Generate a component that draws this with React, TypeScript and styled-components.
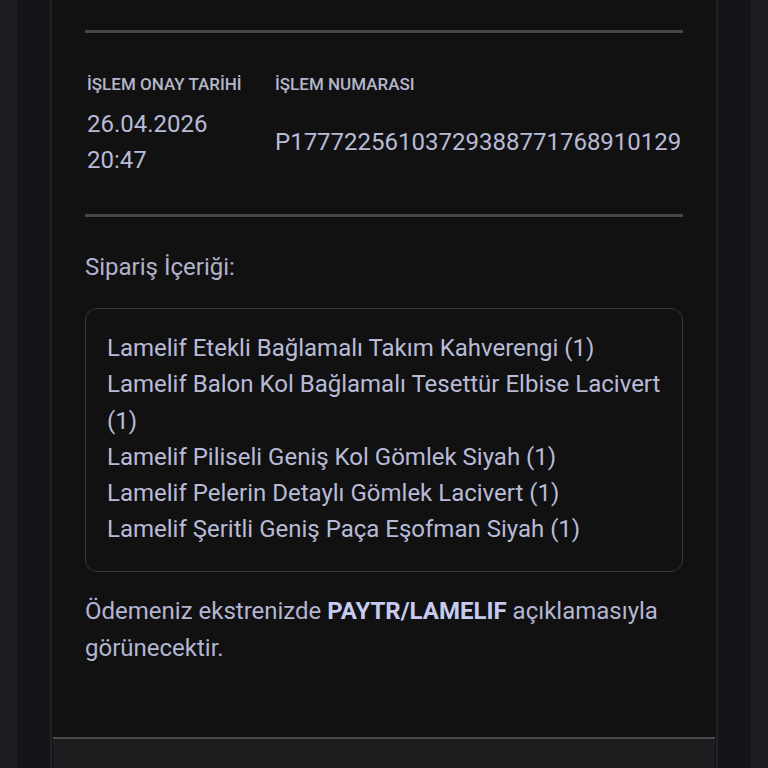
import React from 'react';
import styled, { createGlobalStyle } from 'styled-components';

const GlobalStyle = createGlobalStyle`
  html, body {
    margin: 0;
    padding: 0;
    background: #1d1e23;
    font-family: Roboto, "Noto Sans", "Liberation Sans", sans-serif;
  }
`;

const Screen = styled.div`
  padding: 0 17px;
  min-height: 768px;
  background: #1d1e23;
`;

const Backdrop = styled.div`
  background: #14151a;
  padding: 0 33px;
  min-height: 768px;
`;

const Card = styled.div`
  background: #111111;
  border-left: 2px solid #222226;
  border-right: 2px solid #222226;
  min-height: 768px;
  display: flex;
  flex-direction: column;
`;

const Body = styled.div`
  padding: 30px 33px 0 33px;
  color: #b6b9d6;
`;

const Divider = styled.hr`
  margin: 0;
  border: none;
  height: 3px;
  background: #454548;
`;

const InfoGrid = styled.div`
  display: grid;
  grid-template-columns: 188px 1fr;
  row-gap: 12px;
  padding: 41px 0 36px 2px;
  align-items: center;
`;

const Label = styled.div`
  font-size: 17px;
  font-weight: 500;
  line-height: 20px;
  color: #b4b7cc;
  align-self: start;
  white-space: nowrap;
`;

const Value = styled.div`
  font-size: 24px;
  line-height: 36px;
  color: #b8bbd8;
  white-space: nowrap;
`;

const SectionTitle = styled.div`
  margin-top: 34px;
  font-size: 24px;
  line-height: 32px;
  color: #b0b3cb;
`;

const ItemBox = styled.div`
  margin-top: 25px;
  border: 1px solid #38383c;
  border-radius: 12px;
  padding: 21px 20px 23px 21px;
`;

const Item = styled.div`
  font-size: 24px;
  line-height: 36.3px;
  color: #b8bbd8;
`;

const Note = styled.p`
  margin: 21px 0 0;
  font-size: 24px;
  line-height: 37px;
  color: #b3b6d2;

  strong {
    font-weight: 700;
    color: #c7caf0;
  }
`;

const Footer = styled.div`
  margin: 70px 1px 0;
  flex: 1;
  background: #1d1d1f;
  border-top: 2px solid #4a4a4d;
`;

const items = [
  'Lamelif Etekli Bağlamalı Takım Kahverengi (1)',
  'Lamelif Balon Kol Bağlamalı Tesettür Elbise Lacivert (1)',
  'Lamelif Piliseli Geniş Kol Gömlek Siyah (1)',
  'Lamelif Pelerin Detaylı Gömlek Lacivert (1)',
  'Lamelif Şeritli Geniş Paça Eşofman Siyah (1)',
];

const App: React.FC = () => {
  return (
    <>
      <GlobalStyle />
      <Screen>
        <Backdrop>
          <Card>
            <Body>
              <Divider />
              <InfoGrid>
                <Label>İŞLEM ONAY TARİHİ</Label>
                <Label>İŞLEM NUMARASI</Label>
                <Value>
                  26.04.2026
                  <br />
                  20:47
                </Value>
                <Value>P17772256103729388771768910129</Value>
              </InfoGrid>
              <Divider />
              <SectionTitle>Sipariş İçeriği:</SectionTitle>
              <ItemBox>
                {items.map((item) => (
                  <Item key={item}>{item}</Item>
                ))}
              </ItemBox>
              <Note>
                Ödemeniz ekstrenizde <strong>PAYTR/LAMELIF</strong> açıklamasıyla görünecektir.
              </Note>
            </Body>
            <Footer />
          </Card>
        </Backdrop>
      </Screen>
    </>
  );
};

export default App;
